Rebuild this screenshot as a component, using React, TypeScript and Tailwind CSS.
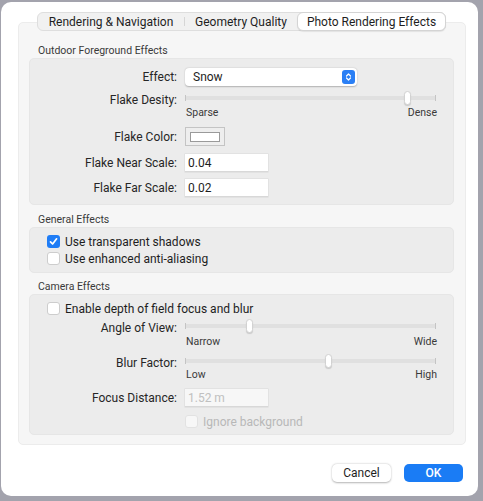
import React from "react";

const font = { fontFamily: 'Roboto, "Noto Sans", sans-serif' };

function Tabs() {
  return (
    <div className="relative z-10 ml-[36px] mt-[10px] flex h-[19px] w-[409px] items-stretch rounded-[6px] border border-[#dedede] bg-[#f1f1f1] text-[12px] text-[#1e1e1e]">
      <div className="flex w-[146px] items-center justify-center">Rendering &amp; Navigation</div>
      <div className="my-[4px] w-px bg-[#d6d6d6]" />
      <div className="flex w-[112px] items-center justify-center">Geometry Quality</div>
      <div className="-my-px -mr-px flex flex-1 items-center justify-center rounded-[6px] border border-[#d4d4d4] bg-white shadow-[0_1px_1px_rgba(0,0,0,0.08)]">
        Photo Rendering Effects
      </div>
    </div>
  );
}

function SectionTitle({ children }: { children: React.ReactNode }) {
  return <div className="flex h-[14px] items-center pl-[9px] text-[10.5px] text-[#3a3a3a]">{children}</div>;
}

function Row({ label, children, className = "", disabled = false, drop = false }: { label: string; children: React.ReactNode; className?: string; disabled?: boolean; drop?: boolean }) {
  return (
    <div className={"flex items-center " + className}>
      <div className={"w-[148px] pr-[1px] text-right text-[12px] " + (drop ? "pt-[4px] " : "") + (disabled ? "text-[#b5b5b5]" : "text-[#262626]")}>{label}</div>
      <div className="ml-[7px] flex items-center">{children}</div>
    </div>
  );
}

function Slider({ pos }: { pos: number }) {
  // track with end ticks and a pill-shaped knob
  return (
    <div className="relative h-[14px] w-[251px]">
      <div className="absolute left-0 right-0 top-[5px] h-[4px] rounded-full bg-[#e0e0e0]" />
      <div className="absolute left-0 top-[4px] h-[6px] w-px bg-[#c4c4c4]" />
      <div className="absolute right-0 top-[4px] h-[6px] w-px bg-[#c4c4c4]" />
      <div
        className="absolute top-0 h-[14px] w-[7px] rounded-[4px] border border-[#d2d2d2] bg-white shadow-[0_1px_1px_rgba(0,0,0,0.15)]"
        style={{ left: pos }}
      />
    </div>
  );
}

function SliderLabels({ left, right, className = "" }: { left: string; right: string; className?: string }) {
  return (
    <div className={"ml-[156px] flex h-[14px] w-[251px] items-center justify-between text-[10.5px] text-[#3a3a3a] " + className}>
      <span>{left}</span>
      <span>{right}</span>
    </div>
  );
}

function Field({ value, disabled = false }: { value: string; disabled?: boolean }) {
  return (
    <div
      className={
        "flex h-[18px] w-[83px] items-center border-b border-[#d8d8d8] pl-[3px] text-[12px] shadow-[0_0_0_0.5px_rgba(0,0,0,0.08)] " +
        (disabled ? "bg-[#f7f7f7] text-[#c0c0c0]" : "bg-white text-[#1e1e1e]")
      }
    >
      {value}
    </div>
  );
}

function Check({ checked = false, label, disabled = false }: { checked?: boolean; label: string; disabled?: boolean }) {
  return (
    <div className="flex h-[15px] items-center">
      {checked ? (
        <div className="flex h-[13px] w-[13px] items-center justify-center rounded-[3px] bg-[#1f7df6]">
          <svg width="9" height="9" viewBox="0 0 9 9">
            <path d="M1.5 4.8 L3.6 7 L7.6 1.8" fill="none" stroke="white" strokeWidth="1.7" strokeLinecap="round" strokeLinejoin="round" />
          </svg>
        </div>
      ) : (
        <div className={"h-[13px] w-[13px] rounded-[3px] border " + (disabled ? "border-[#e2e2e2] bg-[#f7f7f7]" : "border-[#cdcdcd] bg-white")} />
      )}
      <span className={"ml-[5px] text-[12px] " + (disabled ? "text-[#b8b8b8]" : "text-[#1e1e1e]")}>{label}</span>
    </div>
  );
}

function Popup() {
  return (
    <div className="flex h-[18px] w-[172px] items-center justify-between rounded-[4px] bg-white pl-[8px] pr-[2px] text-[12px] text-[#1e1e1e] shadow-[0_0.5px_1.5px_rgba(0,0,0,0.25)]">
      <span>Snow</span>
      <div className="flex h-[14px] w-[13px] items-center justify-center rounded-[3px] bg-[#2a7ff5]">
        <svg width="7" height="10" viewBox="0 0 7 10">
          <path d="M1.5 4 L3.5 2 L5.5 4 M1.5 6 L3.5 8 L5.5 6" fill="none" stroke="white" strokeWidth="1.2" strokeLinecap="round" strokeLinejoin="round" />
        </svg>
      </div>
    </div>
  );
}

function ColorWell() {
  return (
    <div className="flex h-[19px] w-[40px] items-center justify-center border border-[#c4c4c4] bg-[#eeeeee]">
      <div className="h-[10px] w-[30px] border border-[#9a9a9a] bg-white" />
    </div>
  );
}

export default function App() {
  return (
    <div className="h-[501px] w-[483px] bg-[#a3a3ad] pl-[1px] pt-[2px]" style={font}>
      <div className="flex h-[494px] w-[477px] flex-col rounded-[10px] bg-white">
        <Tabs />
        <div className="-mt-[9px] ml-[17px] w-[448px] rounded-[5px] border border-[#ececec] bg-[#f6f6f6] pb-[9px] pl-[10px] pt-[21px]">
          <SectionTitle>Outdoor Foreground Effects</SectionTitle>
          <div className="w-[425px] rounded-[5px] border border-[#e6e6e6] bg-[#ececec] pb-[7px] pt-[9px]">
            <Row label="Effect:" className="h-[18px]">
              <Popup />
            </Row>
            <Row label="Flake Desity:" className="mt-[5px] h-[14px]" drop>
              <Slider pos={219} />
            </Row>
            <SliderLabels left="Sparse" right="Dense" className="mt-[1px]" />
            <Row label="Flake Color:" className="mt-[7px] h-[19px]">
              <ColorWell />
            </Row>
            <Row label="Flake Near Scale:" className="mt-[8px] h-[18px]">
              <Field value="0.04" />
            </Row>
            <Row label="Flake Far Scale:" className="mt-[7px] h-[18px]">
              <Field value="0.02" />
            </Row>
          </div>

          <div className="mt-[8px]">
            <SectionTitle>General Effects</SectionTitle>
          </div>
          <div className="w-[425px] rounded-[5px] border border-[#e6e6e6] bg-[#ececec] pb-[6px] pl-[17px] pt-[6px]">
            <Check checked label="Use transparent shadows" />
            <div className="mt-[2px]">
              <Check label="Use enhanced anti-aliasing" />
            </div>
          </div>

          <div className="mt-[7px]">
            <SectionTitle>Camera Effects</SectionTitle>
          </div>
          <div className="w-[425px] rounded-[5px] border border-[#e6e6e6] bg-[#ececec] pb-[5px] pt-[6px]">
            <div className="pl-[17px]">
              <Check label="Enable depth of field focus and blur" />
            </div>
            <Row label="Angle of View:" className="mt-[3px] h-[14px]" drop>
              <Slider pos={61} />
            </Row>
            <SliderLabels left="Narrow" right="Wide" className="mt-[2px]" />
            <Row label="Blur Factor:" className="mt-[5px] h-[14px]" drop>
              <Slider pos={140} />
            </Row>
            <SliderLabels left="Low" right="High" />
            <Row label="Focus Distance:" className="mt-[7px] h-[18px]">
              <Field value="1.52 m" disabled />
            </Row>
            <div className="ml-[155px] mt-[7px]">
              <Check label="Ignore background" disabled />
            </div>
          </div>
        </div>

        <div className="mr-[15px] mt-[19px] flex justify-end gap-[13px] text-[12px]">
          <div className="flex h-[18px] w-[59px] items-center justify-center rounded-[5px] bg-white text-[#1e1e1e] shadow-[0_0.5px_2px_rgba(0,0,0,0.3)]">
            Cancel
          </div>
          <div className="flex h-[18px] w-[59px] items-center justify-center rounded-[5px] bg-[#1a7cf5] font-medium text-white">
            OK
          </div>
        </div>
      </div>
    </div>
  );
}
